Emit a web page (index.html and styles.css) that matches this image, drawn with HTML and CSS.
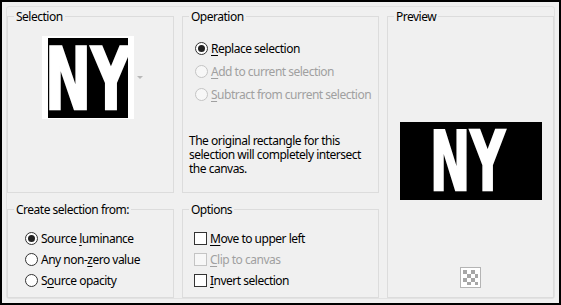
FILE: index.html
```html
<!DOCTYPE html>
<html lang="en">
<head>
  <meta charset="UTF-8" />
  <title>Selection from mask</title>
  <link rel="stylesheet" href="styles.css">
</head>
<body>
  <div class="window">
    <div class="panel">
      <fieldset class="group group-selection">
        <legend>Selection</legend>
        <div class="thumb-row">
          <div class="thumb">
            <svg width="80" height="80" viewBox="0 0 80 80">
              <rect width="80" height="80" fill="#000"/>
              <text x="-3" y="71" textLength="86" lengthAdjust="spacingAndGlyphs" class="ny" font-size="86" stroke="#fff" stroke-width="2.5">NY</text>
            </svg>
          </div>
          <span class="drop-arrow"></span>
        </div>
      </fieldset>

      <fieldset class="group group-operation">
        <legend>Operation</legend>
        <div class="choice-list">
          <label class="choice"><input type="radio" name="op" checked><span><u>R</u>eplace selection</span></label>
          <label class="choice disabled"><input type="radio" name="op" disabled><span><u>A</u>dd to current selection</span></label>
          <label class="choice disabled"><input type="radio" name="op" disabled><span><u>S</u>ubtract from current selection</span></label>
        </div>
        <p class="note">The original rectangle for this selection will completely intersect the canvas.</p>
      </fieldset>

      <fieldset class="group group-preview">
        <legend>Preview</legend>
        <div class="preview-body">
          <svg width="142" height="78" viewBox="0 0 142 78">
            <rect width="142" height="78" fill="#000"/>
            <text x="30" y="68" textLength="75" lengthAdjust="spacingAndGlyphs" class="ny" font-size="82" stroke="#fff" stroke-width="2.5">NY</text>
          </svg>
          <svg class="checker" width="21" height="21" viewBox="0 0 21 21">
            <rect x="0.5" y="0.5" width="20" height="20" fill="#fff" stroke="#b4b4b4"/>
            <g fill="#a6a6a6">
              <rect x="3" y="3" width="4" height="4"/><rect x="11" y="3" width="4" height="4"/>
              <rect x="7" y="7" width="4" height="4"/><rect x="15" y="7" width="3" height="4"/>
              <rect x="3" y="11" width="4" height="4"/><rect x="11" y="11" width="4" height="4"/>
              <rect x="7" y="15" width="4" height="3"/><rect x="15" y="15" width="3" height="3"/>
            </g>
          </svg>
        </div>
      </fieldset>

      <fieldset class="group group-source">
        <legend>Create selection from:</legend>
        <div class="choice-list tight">
          <label class="choice"><input type="radio" name="src" checked><span>Source <u>l</u>uminance</span></label>
          <label class="choice"><input type="radio" name="src"><span>Any non-<u>z</u>ero value</span></label>
          <label class="choice"><input type="radio" name="src"><span>S<u>o</u>urce opacity</span></label>
        </div>
      </fieldset>

      <fieldset class="group group-options">
        <legend>Options</legend>
        <div class="choice-list tight">
          <label class="choice"><input type="checkbox"><span><u>M</u>ove to upper left</span></label>
          <label class="choice disabled"><input type="checkbox" disabled><span><u>C</u>lip to canvas</span></label>
          <label class="choice"><input type="checkbox"><span><u>I</u>nvert selection</span></label>
        </div>
      </fieldset>
    </div>
  </div>
</body>
</html>
```

FILE: styles.css
```css
:root {
  --bg: #f0f0f0;
  --line: #dcdcdc;
  --text: #000;
  --muted: #a0a0a0;
  --font: 'Noto Sans', 'Open Sans', sans-serif;
}
* { box-sizing: border-box; }
body {
  margin: 0;
  background: #fff;
  font-family: var(--font);
  font-size: 12px;
  letter-spacing: -0.5px;
  color: var(--text);
}
.window {
  width: 561px;
  height: 305px;
  border: 2px solid #000;
  background: var(--bg);
  padding: 4px;
}
.panel {
  height: 100%;
  border: 1px solid #e2e2e2;
  border-radius: 3px;
  padding-top: 2px;
  display: grid;
  grid-template-columns: 167px 197px 167px;
  grid-template-rows: 184px 1fr;
  column-gap: 8px;
  row-gap: 9px;
  grid-template-areas:
    "sel op prev"
    "src opt prev";
}
.group {
  margin: 0;
  padding: 0;
  min-width: 0;
  border: 1px solid var(--line);
}
.group legend {
  margin-left: 6px;
  padding: 0 2px;
  line-height: 15px;
}
.group-selection { grid-area: sel; }
.group-operation { grid-area: op; }
.group-preview { grid-area: prev; }
.group-source { grid-area: src; }
.group-options { grid-area: opt; }

/* selection thumbnail */
.thumb-row { display: flex; align-items: center; gap: 3px; padding: 12px 0 0 34px; }
.thumb { background: #fff; padding: 2px 6px 1px; line-height: 0; }
.drop-arrow {
  width: 0; height: 0;
  border-left: 3px solid transparent;
  border-right: 3px solid transparent;
  border-top: 3px solid #b8b8b8;
}
.ny { fill: #fff; font-family: 'DejaVu Sans', sans-serif; font-weight: bold; letter-spacing: 0; }

/* radio / checkbox lists */
.choice-list { display: flex; flex-direction: column; gap: 8px; padding: 17px 0 0 12px; }
.group-source .choice-list { gap: 6px; padding: 14px 0 0 17px; }
.group-options .choice-list { gap: 6px; padding: 14px 0 0 11px; }
.choice {
  display: flex; align-items: center; gap: 3px;
  height: 15px; line-height: 15px; white-space: nowrap;
}
.choice u { text-decoration-thickness: 1px; text-underline-offset: 2px; }
.choice.disabled { color: var(--muted); }
.choice input {
  -webkit-appearance: none; appearance: none;
  margin: 0; width: 13px; height: 13px; flex: none;
  border: 1px solid #333; background: #fff;
}
.choice input[type=radio] { border-radius: 50%; display: grid; place-content: center; }
.choice input[type=radio]:checked::before {
  content: ""; width: 7px; height: 7px; border-radius: 50%; background: #222;
}
.choice input:disabled { border-color: #c4c4c4; background: #f7f7f7; }

.note { margin: 32px 0 0 6px; line-height: 14px; }

/* preview */
.preview-body { display: flex; flex-direction: column; align-items: center; padding-top: 98px; }
.preview-body svg { display: block; }
.checker { margin-top: 67px; }
```
